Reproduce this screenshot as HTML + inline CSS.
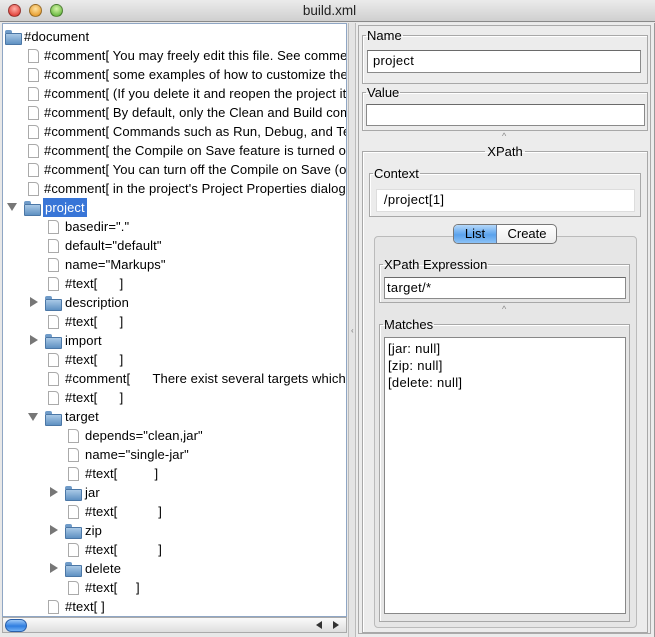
<!DOCTYPE html>
<html><head><style>
*{box-sizing:border-box;margin:0;padding:0}
body{width:655px;height:637px;overflow:hidden;background:#e8e8e8;font-family:"Liberation Sans",sans-serif;font-size:13px;color:#000;position:relative}
.abs{position:absolute}
#title{left:0;top:0;width:655px;height:22px;background:linear-gradient(#ebebeb,#cfcfcf);border-bottom:1px solid #8a8a8a;text-align:center;line-height:22px;font-size:13.5px;color:#222;padding-left:4px}
.btn{position:absolute;top:4px;width:13px;height:13px;border-radius:50%;border:1px solid rgba(0,0,0,.35)}
#tree{left:2px;top:23px;width:345px;height:594px;background:#fff;overflow:hidden;border:1px solid #8fa6c4}
.row{position:absolute;height:19px;line-height:19px;white-space:nowrap;letter-spacing:0.1px}
.doc{position:absolute;width:11px;height:14px;background:#fff;border:1px solid #aaa;border-radius:0 4px 0 0}
.fold{position:absolute;width:17px;height:12px;background:linear-gradient(#a9c9e6,#5f91c2);border:1px solid #4b77a6;border-radius:1px}
.fold:before{content:"";position:absolute;left:-1px;top:-4px;width:7px;height:3px;background:#6f9bc8;border-radius:2px 2px 0 0}
.tri{position:absolute;width:0;height:0}
.tr{border-left:8px solid #777;border-top:5px solid transparent;border-bottom:5px solid transparent}
.td{border-top:8px solid #777;border-left:5px solid transparent;border-right:5px solid transparent}
#hs{left:2px;top:617px;width:345px;height:16px;background:linear-gradient(#fafafa,#dedede);border:1px solid #aaa}
fieldset{position:absolute;border:1px solid #a8a8a8;box-shadow:inset 1px 1px 0 #fff}
legend{font-size:13px;padding:0 1px;margin-left:3px}
.tf{position:absolute;background:#fff;border:1px solid #8a8a8a;border-top-color:#6a6a6a;padding-left:5px;line-height:20px;font-size:13px;letter-spacing:0.3px}
</style></head><body>
<div id="title" class="abs">build.xml</div>
<div class="btn" style="left:8px;background:radial-gradient(circle at 50% 35%,#ffb0a8,#d8201a)"></div>
<div class="btn" style="left:29px;background:radial-gradient(circle at 50% 35%,#ffe2a0,#e08a10)"></div>
<div class="btn" style="left:50px;background:radial-gradient(circle at 50% 35%,#d6f5a8,#4aa825)"></div>

<div id="tree" class="abs">
<div class="fold" style="left:2px;top:9px"></div><div class="row" style="left:21px;top:3px">#document</div>
<div class="doc" style="left:25px;top:25px"></div><div class="row" style="left:41px;top:22px">#comment[ You may freely edit this file. See commented blocks below for</div>
<div class="doc" style="left:25px;top:44px"></div><div class="row" style="left:41px;top:41px">#comment[ some examples of how to customize the build.</div>
<div class="doc" style="left:25px;top:63px"></div><div class="row" style="left:41px;top:60px">#comment[ (If you delete it and reopen the project it will be recreated.)</div>
<div class="doc" style="left:25px;top:82px"></div><div class="row" style="left:41px;top:79px">#comment[ By default, only the Clean and Build commands use this build script.</div>
<div class="doc" style="left:25px;top:101px"></div><div class="row" style="left:41px;top:98px">#comment[ Commands such as Run, Debug, and Test only use this build script if</div>
<div class="doc" style="left:25px;top:120px"></div><div class="row" style="left:41px;top:117px">#comment[ the Compile on Save feature is turned off for the project.</div>
<div class="doc" style="left:25px;top:139px"></div><div class="row" style="left:41px;top:136px">#comment[ You can turn off the Compile on Save (or Deploy on Save) setting</div>
<div class="doc" style="left:25px;top:158px"></div><div class="row" style="left:41px;top:155px">#comment[ in the project's Project Properties dialog box.</div>
<div class="tri td" style="left:4px;top:179px"></div><div class="fold" style="left:21px;top:180px"></div><div class="row" style="left:40px;top:174px;background:#3875d7;color:#fff;padding:0 2px">project</div>
<div class="doc" style="left:45px;top:196px"></div><div class="row" style="left:62px;top:193px">basedir="."</div>
<div class="doc" style="left:45px;top:215px"></div><div class="row" style="left:62px;top:212px">default="default"</div>
<div class="doc" style="left:45px;top:234px"></div><div class="row" style="left:62px;top:231px">name="Markups"</div>
<div class="doc" style="left:45px;top:253px"></div><div class="row" style="left:62px;top:250px">#text[&nbsp;&nbsp;&nbsp;&nbsp;&nbsp;&nbsp;]</div>
<div class="tri tr" style="left:27px;top:273px"></div><div class="fold" style="left:42px;top:275px"></div><div class="row" style="left:62px;top:269px">description</div>
<div class="doc" style="left:45px;top:291px"></div><div class="row" style="left:62px;top:288px">#text[&nbsp;&nbsp;&nbsp;&nbsp;&nbsp;&nbsp;]</div>
<div class="tri tr" style="left:27px;top:311px"></div><div class="fold" style="left:42px;top:313px"></div><div class="row" style="left:62px;top:307px">import</div>
<div class="doc" style="left:45px;top:329px"></div><div class="row" style="left:62px;top:326px">#text[&nbsp;&nbsp;&nbsp;&nbsp;&nbsp;&nbsp;]</div>
<div class="doc" style="left:45px;top:348px"></div><div class="row" style="left:62px;top:345px">#comment[&nbsp;&nbsp;&nbsp;&nbsp;&nbsp;&nbsp;There exist several targets which are by default empty</div>
<div class="doc" style="left:45px;top:367px"></div><div class="row" style="left:62px;top:364px">#text[&nbsp;&nbsp;&nbsp;&nbsp;&nbsp;&nbsp;]</div>
<div class="tri td" style="left:25px;top:389px"></div><div class="fold" style="left:42px;top:390px"></div><div class="row" style="left:62px;top:383px">target</div>
<div class="doc" style="left:65px;top:405px"></div><div class="row" style="left:82px;top:402px">depends="clean,jar"</div>
<div class="doc" style="left:65px;top:424px"></div><div class="row" style="left:82px;top:421px">name="single-jar"</div>
<div class="doc" style="left:65px;top:443px"></div><div class="row" style="left:82px;top:440px">#text[&nbsp;&nbsp;&nbsp;&nbsp;&nbsp;&nbsp;&nbsp;&nbsp;&nbsp;&nbsp;]</div>
<div class="tri tr" style="left:47px;top:463px"></div><div class="fold" style="left:62px;top:465px"></div><div class="row" style="left:82px;top:459px">jar</div>
<div class="doc" style="left:65px;top:481px"></div><div class="row" style="left:82px;top:478px">#text[&nbsp;&nbsp;&nbsp;&nbsp;&nbsp;&nbsp;&nbsp;&nbsp;&nbsp;&nbsp;&nbsp;]</div>
<div class="tri tr" style="left:47px;top:501px"></div><div class="fold" style="left:62px;top:503px"></div><div class="row" style="left:82px;top:497px">zip</div>
<div class="doc" style="left:65px;top:519px"></div><div class="row" style="left:82px;top:516px">#text[&nbsp;&nbsp;&nbsp;&nbsp;&nbsp;&nbsp;&nbsp;&nbsp;&nbsp;&nbsp;&nbsp;]</div>
<div class="tri tr" style="left:47px;top:539px"></div><div class="fold" style="left:62px;top:541px"></div><div class="row" style="left:82px;top:535px">delete</div>
<div class="doc" style="left:65px;top:557px"></div><div class="row" style="left:82px;top:554px">#text[&nbsp;&nbsp;&nbsp;&nbsp;&nbsp;]</div>
<div class="doc" style="left:45px;top:576px"></div><div class="row" style="left:62px;top:573px">#text[ ]</div>
</div>
<div id="hs" class="abs">
 <div class="abs" style="left:2px;top:1px;width:22px;height:13px;border-radius:7px;background:linear-gradient(#9cc8f7,#2f7ee0 55%,#6fb0f5);border:1px solid #2a5fa8"></div>
 <div class="abs" style="left:313px;top:3px;border-right:6px solid #333;border-top:4px solid transparent;border-bottom:4px solid transparent"></div>
 <div class="abs" style="left:330px;top:3px;border-left:6px solid #333;border-top:4px solid transparent;border-bottom:4px solid transparent"></div>
</div>
<div class="abs" style="left:348px;top:23px;width:8px;height:614px;background:#e4e4e4;border-left:1px solid #bbb;border-right:1px solid #bbb"></div>
<div class="abs" style="left:351px;top:326px;color:#777;font-size:8px">‹</div>
<div class="abs" style="left:356px;top:23px;width:299px;height:614px;background:#ececec;border-right:1px solid #999"></div>
<div class="abs" style="left:358px;top:25px;width:293px;height:609px;border:1px solid #aaa"></div>

<fieldset style="left:362px;top:28px;width:286px;height:56px"><legend>Name</legend></fieldset>
<div class="tf" style="left:367px;top:50px;width:274px;height:23px">project</div>
<fieldset style="left:362px;top:85px;width:286px;height:46px"><legend>Value</legend></fieldset>
<div class="tf" style="left:366px;top:104px;width:279px;height:22px"></div>
<div class="abs" style="left:502px;top:131px;font-size:9px;color:#888">^</div>
<fieldset style="left:362px;top:144px;width:286px;height:489px"><legend style="margin:0 auto;padding:0 2px">XPath</legend></fieldset>
<fieldset style="left:369px;top:166px;width:272px;height:51px"><legend>Context</legend></fieldset>
<div class="tf" style="left:376px;top:189px;width:259px;height:23px;border:1px solid #ddd;padding-left:4px">&thinsp;/project[1]</div>
<div class="abs" style="left:374px;top:236px;width:263px;height:392px;border:1px solid #bbb;border-radius:4px;background:#e6e6e6"></div>
<div class="abs" style="left:453px;top:224px;width:104px;height:20px;border:1px solid #777;border-radius:5px;background:linear-gradient(#fff,#ececec);overflow:hidden">
 <div class="abs" style="left:0;top:0;width:43px;height:18px;background:linear-gradient(#b5d8fa,#5aa2ec 55%,#8cc2f6);border-right:1px solid #6a7fa0;text-align:center;line-height:18px">List</div>
 <div class="abs" style="left:43px;top:0;width:60px;height:18px;text-align:center;line-height:18px">Create</div>
</div>
<fieldset style="left:379px;top:257px;width:251px;height:46px"><legend>XPath Expression</legend></fieldset>
<div class="tf" style="left:384px;top:277px;width:242px;height:22px;padding-left:2px">target/*</div>
<div class="abs" style="left:502px;top:304px;font-size:9px;color:#888">^</div>
<fieldset style="left:379px;top:317px;width:251px;height:305px"><legend>Matches</legend></fieldset>
<div class="abs" style="left:384px;top:337px;width:242px;height:277px;background:#fff;border:1px solid #888;padding:2px 3px;line-height:17px;letter-spacing:0.3px">[jar: null]<br>[zip: null]<br>[delete: null]</div>
</body></html>
